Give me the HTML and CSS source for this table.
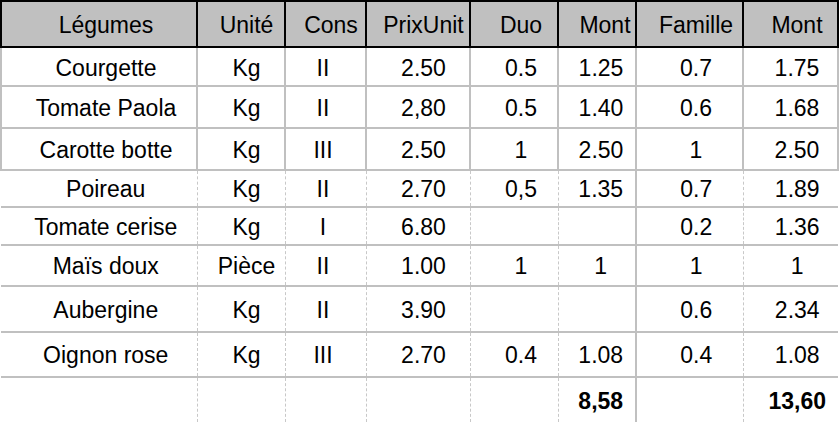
FILE: index.html
```html
<!DOCTYPE html>
<html lang="fr">
<head>
<meta charset="utf-8">
<title>Légumes</title>
<link rel="stylesheet" href="styles.css">
</head>
<body>
<table class="sheet">
  <colgroup>
    <col class="c1"><col class="c2"><col class="c3"><col class="c4"><col class="c5"><col class="c6"><col class="c7"><col class="c8">
  </colgroup>
  <thead>
    <tr class="head">
      <th>Légumes</th><th>Unité</th><th>Cons</th><th>PrixUnit</th><th>Duo</th><th>Mont</th><th>Famille</th><th>Mont</th>
    </tr>
  </thead>
  <tbody>
    <tr class="solid r1"><td>Courgette</td><td>Kg</td><td>II</td><td>2.50</td><td>0.5</td><td>1.25</td><td>0.7</td><td>1.75</td></tr>
    <tr class="solid r2"><td>Tomate Paola</td><td>Kg</td><td>II</td><td>2,80</td><td>0.5</td><td>1.40</td><td>0.6</td><td>1.68</td></tr>
    <tr class="solid r3"><td>Carotte botte</td><td>Kg</td><td>III</td><td>2.50</td><td>1</td><td>2.50</td><td>1</td><td>2.50</td></tr>
    <tr class="dash r4"><td>Poireau</td><td>Kg</td><td>II</td><td>2.70</td><td>0,5</td><td>1.35</td><td>0.7</td><td>1.89</td></tr>
    <tr class="dash r5"><td>Tomate cerise</td><td>Kg</td><td>I</td><td>6.80</td><td></td><td></td><td>0.2</td><td>1.36</td></tr>
    <tr class="dash r6"><td>Maïs doux</td><td>Pièce</td><td>II</td><td>1.00</td><td>1</td><td>1</td><td>1</td><td>1</td></tr>
    <tr class="dash r7"><td>Aubergine</td><td>Kg</td><td>II</td><td>3.90</td><td></td><td></td><td>0.6</td><td>2.34</td></tr>
    <tr class="dash r8"><td>Oignon rose</td><td>Kg</td><td>III</td><td>2.70</td><td>0.4</td><td>1.08</td><td>0.4</td><td>1.08</td></tr>
    <tr class="dash total r9"><td></td><td></td><td></td><td></td><td></td><td class="sum">8,58</td><td></td><td class="sum">13,60</td></tr>
  </tbody>
</table>
</body>
</html>
```

FILE: styles.css
```css
html, body {
  margin: 0;
  padding: 0;
  background: #ffffff;
}

.sheet {
  border-collapse: collapse;
  table-layout: fixed;
  width: 839px;
  font-family: "Liberation Sans", Arial, sans-serif;
  font-size: 23px;
  line-height: 1;
  color: #000;
}

.c1 { width: 196px; }
.c2 { width: 88px; }
.c3 { width: 81px; }
.c4 { width: 104px; }
.c5 { width: 88px; }
.c6 { width: 78px; }
.c7 { width: 107px; }
.c8 { width: 95px; }

.sheet th,
.sheet td {
  padding: 2px 0 0 0;
  text-align: center;
  vertical-align: middle;
  font-weight: normal;
  white-space: nowrap;
  overflow: hidden;
}

.head th {
  height: 42px;
  background: #c0c0c0;
  border: 2px solid #000;
}

/* horizontal centering offsets per column */
.sheet tr > :nth-child(1) { padding-left: 14px; }
.sheet tr > :nth-child(2) { padding-left: 11px; }
.sheet tr > :nth-child(3) { padding-right: 5px; }
.sheet tr > :nth-child(4) { padding-left: 11px; }
.sheet tr > :nth-child(5) { padding-left: 14px; }
.sheet tr > :nth-child(6) { padding-left: 8px; }
.sheet tr > :nth-child(7) { padding-left: 13px; }
.sheet tr > :nth-child(8) { padding-left: 13px; }
.head th:nth-child(3) { padding-left: 11px; padding-right: 0; }
.head th:nth-child(6) { padding-left: 16px; }

.solid td {
  border: 2px solid #c0c0c0;
}

.dash td {
  border-top: 2px solid #c0c0c0;
  border-bottom: 2px solid #c0c0c0;
  border-left: 1px dashed #c8c8c8;
  border-right: 1px dashed #c8c8c8;
}
.dash td:first-child { border-left: none; }
.dash td:last-child { border-right: none; }
.dash td:nth-child(7) { border-left: 2px solid #c0c0c0; }
.total td { border-bottom: none; }

.sheet td.sum { font-weight: bold; }

.r1 td { height: 33px; padding-top: 4px; }
.r2 td { height: 38px; }
.r3 td { height: 38px; }
.r4 td { height: 33px; }
.r5 td { height: 34px; }
.r6 td { height: 37px; }
.r7 td { height: 42px; }
.r8 td { height: 41px; }
.r9 td { height: 42px; }
```
